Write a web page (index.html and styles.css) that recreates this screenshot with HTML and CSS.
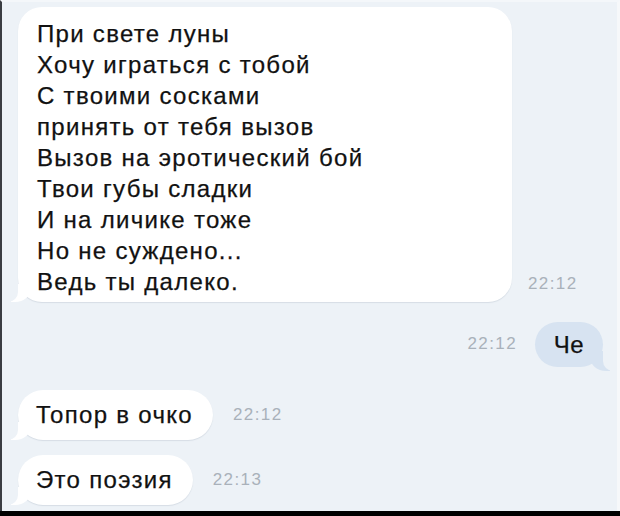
FILE: index.html
```html
<!DOCTYPE html>
<html lang="ru">
<head>
    <meta charset="UTF-8">
    <title>Переписка</title>
    <link rel="stylesheet" href="styles.css">
</head>
<body>

<div id="chat">
    <div class="row">
        <div class="bubble in big">
            При свете луны<br>
            Хочу играться с тобой<br>
            С твоими сосками<br>
            принять от тебя вызов<br>
            Вызов на эротический бой<br>
            Твои губы сладки<br>
            И на личике тоже<br>
            Но не суждено...<br>
            Ведь ты далеко.
        </div>
        <span class="time">22:12</span>
    </div>

    <div class="row out">
        <span class="time">22:12</span>
        <div class="bubble mine">Че</div>
    </div>

    <div class="row">
        <div class="bubble in tail">Топор в очко</div>
        <span class="time">22:12</span>
    </div>

    <div class="row">
        <div class="bubble in tail">Это поэзия</div>
        <span class="time">22:13</span>
    </div>
</div>

</body>
</html>
```

FILE: styles.css
```css
body {
    margin: 0;
    width: 620px;
    height: 516px;
    overflow: hidden;
    background: #000;
    font-family: "Liberation Sans", Arial, sans-serif;
}

#chat {
    height: 511px;
    box-sizing: border-box;
    background: #edf2f7;
    border-left: 2px solid #3a3d42;
    border-right: 3px solid #f6f8fa;
    border-top: 2px solid #f4f7fa;
    padding: 5px 14px 0 16px;
    display: flex;
    flex-direction: column;
}

.row {
    display: flex;
    align-items: flex-end;
}

.row.out {
    justify-content: flex-end;
    margin-top: 20px;
}

.bubble {
    position: relative;
    background: #fff;
    color: #111;
    font-size: 24px;
    letter-spacing: 1.3px;
    border-radius: 22px;
    box-shadow: 0 1px 1px #d6dde5;
    -webkit-text-stroke: 0.25px #111;
}

.big {
    width: 494px;
    height: 295px;
    box-sizing: border-box;
    padding: 11px 18px 0 19px;
    line-height: 31px;
    border-radius: 24px;
}

.tail {
    height: 50px;
    box-sizing: border-box;
    padding: 0 20px 0 18px;
    line-height: 50px;
    border-radius: 25px;
}

.row:nth-child(3) {
    margin-top: 23px;
}

.row:nth-child(4) {
    margin-top: 15px;
}

.mine {
    background: #d7e3f1;
    height: 45px;
    width: 68px;
    box-sizing: border-box;
    line-height: 45px;
    text-align: center;
    border-radius: 23px;
    box-shadow: none;
    letter-spacing: 0.5px;
}

/* хвостики пузырей */
.tail::before,
.big::before {
    content: "";
    position: absolute;
    bottom: 0;
    left: -7px;
    width: 20px;
    height: 18px;
    background: #fff;
    border-bottom-right-radius: 16px 14px;
}

.tail::after,
.big::after {
    content: "";
    position: absolute;
    bottom: 0;
    left: -10px;
    width: 10px;
    height: 20px;
    background: #edf2f7;
    border-bottom-right-radius: 10px;
}

.mine::before {
    content: "";
    position: absolute;
    bottom: -4px;
    right: -7px;
    width: 20px;
    height: 20px;
    background: #d7e3f1;
    border-bottom-left-radius: 16px 14px;
}

.mine::after {
    content: "";
    position: absolute;
    bottom: -4px;
    right: -10px;
    width: 10px;
    height: 22px;
    background: #edf2f7;
    border-bottom-left-radius: 10px;
}

.time {
    color: #a9b1ba;
    font-size: 17px;
    letter-spacing: 1.4px;
}

.big + .time {
    margin-left: 16px;
    margin-bottom: 8px;
}

.out .time {
    margin-right: 18px;
    margin-bottom: 13px;
}

.tail + .time {
    margin-left: 20px;
    margin-bottom: 15px;
}
```
